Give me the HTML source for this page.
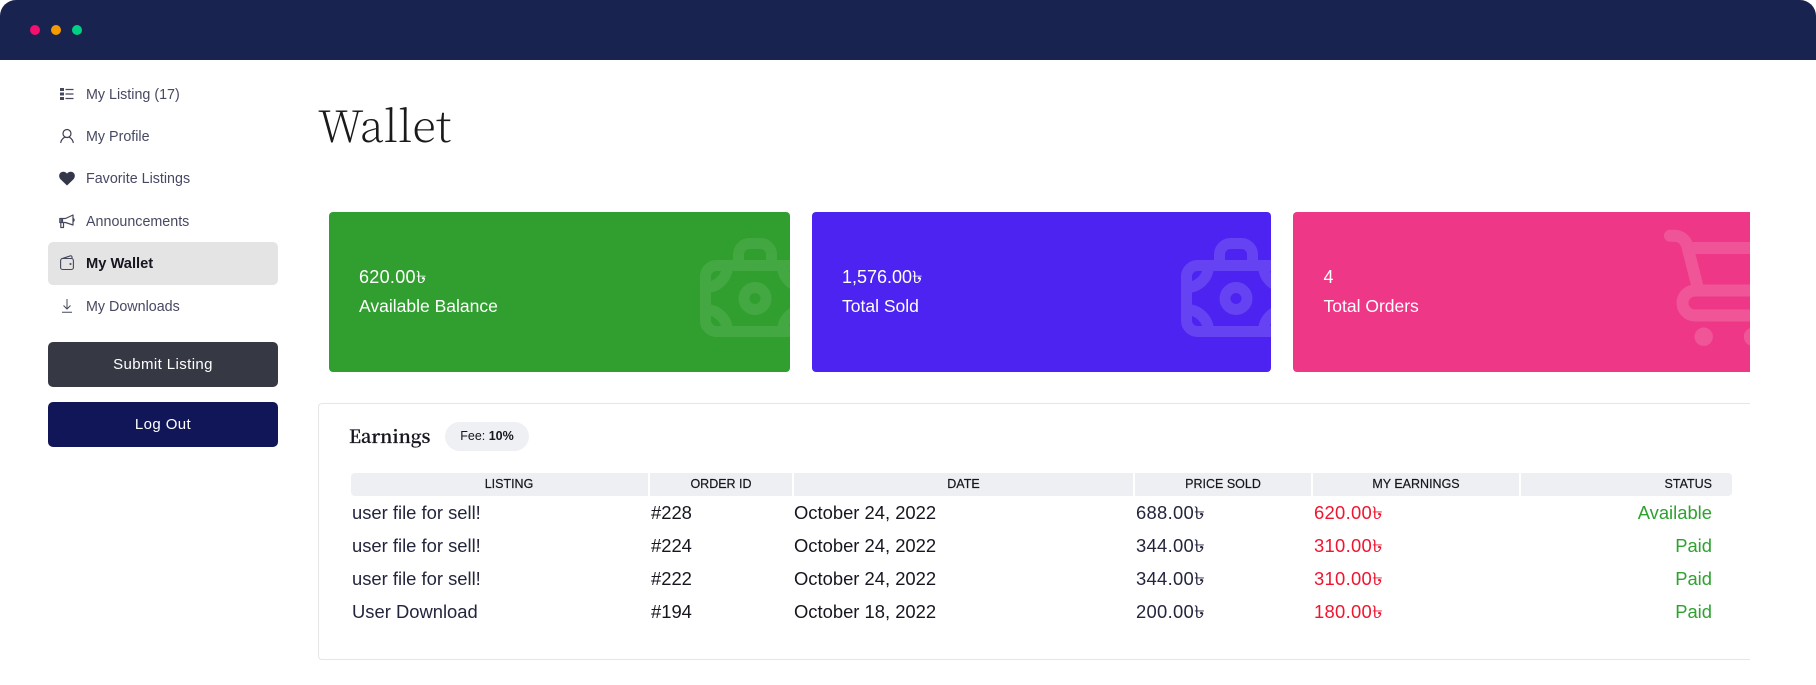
<!DOCTYPE html>
<html><head><meta charset="utf-8"><title>Wallet</title>
<style>
html,body{margin:0;padding:0;background:#fff}
body{width:1816px;height:685px;position:relative;overflow:hidden;font-family:"Liberation Sans","Noto Sans CJK SC",sans-serif}
.t{position:absolute;white-space:nowrap}
.hdr{left:0;top:0;width:1816px;height:60px;background:#18244f;border-radius:16px 16px 0 0;position:absolute}
.dot{position:absolute;width:10px;height:10px;border-radius:50%;top:25px}
.nav{position:absolute;left:86px;font-size:14.3px;line-height:20px;color:#474962;white-space:nowrap}
.ic{position:absolute;overflow:visible}
.btn{position:absolute;left:48px;width:230px;height:45px;border-radius:5px;color:#fff;font-size:15px;line-height:46px;text-align:center;letter-spacing:.4px}
.card{position:absolute;top:212px;height:160px;border-radius:4px;overflow:hidden;color:#fff}
.v{position:absolute;font-size:18px;line-height:24px;top:53px;white-space:nowrap}
.l{position:absolute;font-size:17.5px;line-height:24px;top:82px;white-space:nowrap}
.th{position:absolute;top:473px;height:23px;background:#eeeff3;font-size:12.5px;line-height:23px;color:#15161f;text-align:center;-webkit-text-stroke:.2px #15161f}
.td{position:absolute;font-size:18.4px;line-height:24px;white-space:nowrap}
.p{letter-spacing:.3px}
.k{display:inline-block;line-height:0;font-size:.95em;transform:scaleX(1.25);transform-origin:0 50%;margin-right:.15em;letter-spacing:0}
.n{color:#23253d}.b{color:#15161f}.r{color:#f0142f}.g{color:#2ea22f;right:104px;text-align:right}
</style></head><body>
<div class="hdr"></div>
<div class="dot" style="left:30px;background:#f50f6e"></div>
<div class="dot" style="left:51px;background:#f59b00"></div>
<div class="dot" style="left:72px;background:#00d084"></div>

<svg class="ic" style="left:60px;top:87px" width="14" height="14" viewBox="0 0 14 14"><g fill="#45475c"><rect x="0" y="1" width="4" height="3"/><rect x="0" y="5.5" width="4" height="3"/><rect x="0" y="10" width="4" height="3"/></g><g stroke="#45475c" stroke-width="1.3" fill="none"><path d="M5.500 2.500H13.500M5.500 7H13.500M5.500 11.500H13.500"/></g></svg>
<div class="nav" style="top:85px">My Listing (17)</div>
<svg class="ic" style="left:60px;top:128px" width="14" height="15" viewBox="0 0 14 15" fill="none" stroke="#3b3d50" stroke-width="1.2"><circle cx="7" cy="5.500" r="4"/><path d="M.8 14.500C1.200 11.500 3 10.300 4.600 9.200M13.200 14.500C12.800 11.500 11 10.300 9.400 9.200" stroke-linecap="round"/></svg>
<div class="nav" style="top:127px">My Profile</div>
<svg class="ic" style="left:59px;top:171px" width="16" height="15" viewBox="0 0 16 15"><path d="M8 14.500L1.500 8.300C-.5 6-.2 2.800 2 1.400C4 .2 6.500 .6 8 2.600C9.500 .6 12 .2 14 1.400C16.200 2.800 16.500 6 14.500 8.300Z" fill="#34364a"/></svg>
<div class="nav" style="top:169px">Favorite Listings</div>
<svg class="ic" style="left:59px;top:214px" width="16" height="15" viewBox="0 0 16 15" fill="none" stroke="#45475c" stroke-width="1.200" stroke-linejoin="round"><path d="M.8 4.500H6.500L14 1V11L6.500 8.500H.8Z"/><path d="M2.200 4.500V8.500M3.500 4.500V8.500"/><path d="M1.800 8.500V13.500H4.500V9"/><path d="M14 4.500C15.500 5 15.500 7 14 7.500"/></svg>
<div class="nav" style="top:212px">Announcements</div>
<div style="position:absolute;left:48px;top:242px;width:230px;height:43px;background:#e4e4e4;border-radius:5px"></div>
<svg class="ic" style="left:60px;top:255px" width="14" height="15" viewBox="0 0 14 15" fill="none" stroke="#45475c" stroke-width="1.100"><rect x=".6" y="3.500" width="12.800" height="11" rx="2"/><path d="M1.500 3.800L10.500 .8C11.300 .6 12 1.200 12 2V3.500"/><circle cx="10.500" cy="9" r=".5" fill="#45475c"/></svg>
<div class="nav" style="top:254px;color:#15161f;font-weight:700;font-size:14.7px">My Wallet</div>
<svg class="ic" style="left:62px;top:299px" width="10" height="14" viewBox="0 0 10 14" fill="none" stroke="#45475c" stroke-width="1"><path d="M5 0V10M1.500 6.500L5 10L8.500 6.500M0 13.300H10"/></svg>
<div class="nav" style="top:297px">My Downloads</div>
<div class="btn" style="top:342px;background:#363844">Submit Listing</div>
<div class="btn" style="top:402px;background:#111658">Log Out</div>

<div class="t" style="left:318px;top:88px;font-family:'Noto Serif CJK SC','Liberation Serif',serif;font-weight:200;font-size:43.8px;line-height:72px;color:#1a1a1a">Wallet</div>

<div class="card" style="left:329px;width:461px;background:#319f2f">
<div class="v p" style="left:30px">620.00<span class="k">৳</span></div><div class="l" style="left:30px">Available Balance</div>
<svg class="ic" style="left:371px;top:26px;overflow:hidden" width="90" height="110" viewBox="0 0 90 110" fill="none" stroke="#fff" stroke-width="11" opacity=".09"><rect x="5.500" y="27.500" width="99" height="66" rx="11"/><path d="M38.500 27.500V16.500A11 11 0 0 1 49.500 5.500H60.500A11 11 0 0 1 71.500 16.500V27.500"/><circle cx="55" cy="60.500" r="11"/><path d="M27.500 27.500A22 22 0 0 1 5.500 49.500M5.500 71.500A22 22 0 0 1 27.500 93.500M82.500 27.500A22 22 0 0 0 104.500 49.500M82.500 93.500A22 22 0 0 1 104.500 71.500"/></svg>
</div>
<div class="card" style="left:812px;width:459px;background:#4c23f0">
<div class="v" style="left:30px">1,576.00<span class="k">৳</span></div><div class="l" style="left:30px">Total Sold</div>
<svg class="ic" style="left:369px;top:26px;overflow:hidden" width="90" height="110" viewBox="0 0 90 110" fill="none" stroke="#fff" stroke-width="11" opacity=".14"><rect x="5.500" y="27.500" width="99" height="66" rx="11"/><path d="M38.500 27.500V16.500A11 11 0 0 1 49.500 5.500H60.500A11 11 0 0 1 71.500 16.500V27.500"/><circle cx="55" cy="60.500" r="11"/><path d="M27.500 27.500A22 22 0 0 1 5.500 49.500M5.500 71.500A22 22 0 0 1 27.500 93.500M82.500 27.500A22 22 0 0 0 104.500 49.500M82.500 93.500A22 22 0 0 1 104.500 71.500"/></svg>
</div>
<div class="card" style="left:1293px;width:457px;background:#ee3786;border-radius:4px 0 0 4px">
<div class="v" style="left:30.500px">4</div><div class="l" style="left:30.500px">Total Orders</div>
<svg class="ic" style="left:0;top:0;overflow:hidden" width="457" height="160" viewBox="1293 212 457 160" fill="none" stroke="#fff" stroke-width="12" opacity=".15"><path d="M1670 235.700H1674C1680 235.700 1685 239 1687 245L1698.500 290.500" stroke-linecap="round"/><path d="M1689 248H1800"/><path d="M1800 290.500H1695A12.500 12.500 0 0 0 1695 315.500H1800"/><circle cx="1703.700" cy="336.700" r="9.200" fill="#fff" stroke="none"/><circle cx="1753" cy="336.700" r="9.200" fill="#fff" stroke="none"/></svg>
</div>

<div style="position:absolute;left:318px;top:403px;width:1432px;height:257px;border:1px solid #e6e6e6;border-right:0;border-radius:4px 0 0 4px;box-sizing:border-box"></div>
<div class="t" style="left:349px;top:422px;font-family:'Noto Serif CJK SC','Liberation Serif',serif;font-weight:600;font-size:18.2px;line-height:28px;color:#15161f;-webkit-text-stroke:.25px #15161f">Earnings</div>
<div style="position:absolute;left:445px;top:422px;width:84px;height:29px;border-radius:15px;background:#eff0f4;font-size:12.500px;line-height:29px;text-align:center;color:#15161f">Fee: <b>10%</b></div>

<div class="th" style="left:351px;width:297px;border-radius:4px 0 0 4px;padding-left:19px;box-sizing:border-box">LISTING</div>
<div class="th" style="left:650px;width:142px">ORDER ID</div>
<div class="th" style="left:794px;width:339px">DATE</div>
<div class="th" style="left:1135px;width:176px">PRICE SOLD</div>
<div class="th" style="left:1313px;width:206px">MY EARNINGS</div>
<div class="th" style="left:1521px;width:211px;border-radius:0 4px 4px 0;text-align:right;padding-right:20px;box-sizing:border-box">STATUS</div>

<div class="td n" style="left:352px;top:501px">user file for sell!</div><div class="td b" style="left:651px;top:501px">#228</div><div class="td b" style="left:794px;top:501px">October 24, 2022</div><div class="td n p" style="left:1136px;top:501px">688.00<span class="k">৳</span></div><div class="td r p" style="left:1314px;top:501px">620.00<span class="k">৳</span></div><div class="td g" style="top:501px">Available</div>
<div class="td n" style="left:352px;top:534px">user file for sell!</div><div class="td b" style="left:651px;top:534px">#224</div><div class="td b" style="left:794px;top:534px">October 24, 2022</div><div class="td n p" style="left:1136px;top:534px">344.00<span class="k">৳</span></div><div class="td r p" style="left:1314px;top:534px">310.00<span class="k">৳</span></div><div class="td g" style="top:534px">Paid</div>
<div class="td n" style="left:352px;top:567px">user file for sell!</div><div class="td b" style="left:651px;top:567px">#222</div><div class="td b" style="left:794px;top:567px">October 24, 2022</div><div class="td n p" style="left:1136px;top:567px">344.00<span class="k">৳</span></div><div class="td r p" style="left:1314px;top:567px">310.00<span class="k">৳</span></div><div class="td g" style="top:567px">Paid</div>
<div class="td n" style="left:352px;top:600px">User Download</div><div class="td b" style="left:651px;top:600px">#194</div><div class="td b" style="left:794px;top:600px">October 18, 2022</div><div class="td n p" style="left:1136px;top:600px">200.00<span class="k">৳</span></div><div class="td r p" style="left:1314px;top:600px">180.00<span class="k">৳</span></div><div class="td g" style="top:600px">Paid</div>
</body></html>
